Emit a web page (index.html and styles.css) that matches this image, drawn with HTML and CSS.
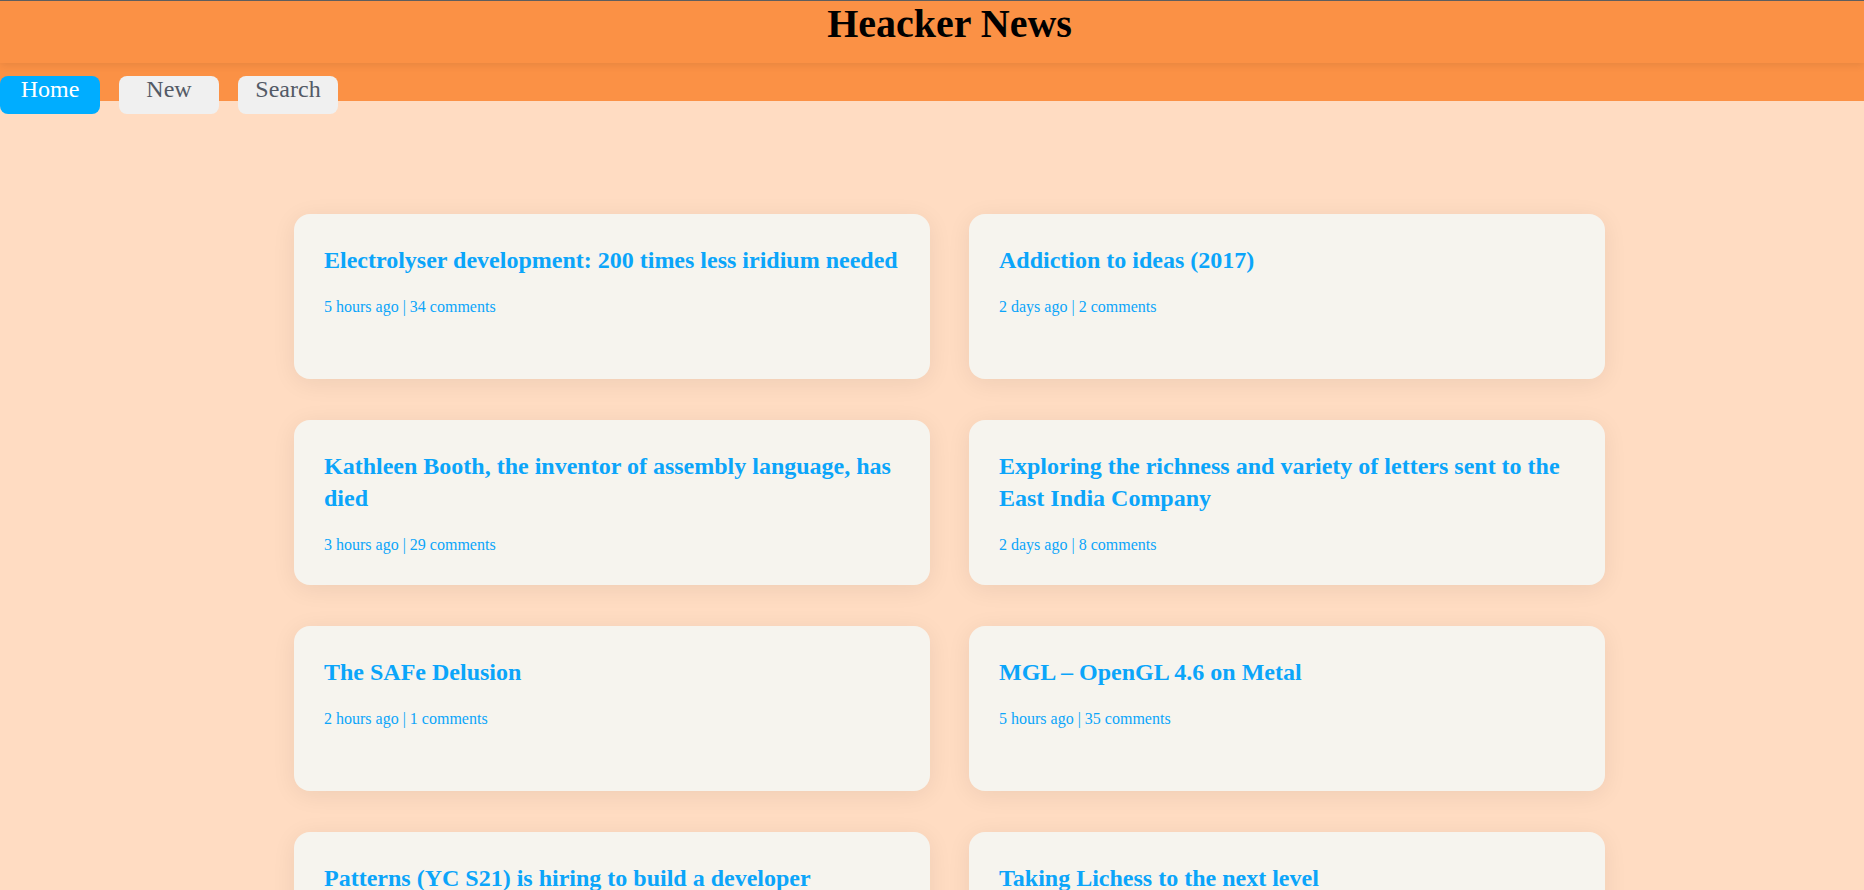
FILE: index.html
```html
<!DOCTYPE html>
<html lang="en">
<head>
<meta charset="utf-8">
<title>Heacker News</title>
<link rel="stylesheet" href="styles.css">
</head>
<body>
<header class="site-header">
  <h1 class="site-title">Heacker News</h1>
</header>
<nav class="tabs">
  <a class="tab tab-active" href="#">Home</a>
  <a class="tab" href="#">New</a>
  <a class="tab" href="#">Search</a>
</nav>
<main class="feed">
  <article class="card">
    <h2 class="card-title">Electrolyser development: 200 times less iridium needed</h2>
    <p class="card-meta">5 hours ago | 34 comments</p>
  </article>
  <article class="card">
    <h2 class="card-title">Addiction to ideas (2017)</h2>
    <p class="card-meta">2 days ago | 2 comments</p>
  </article>
  <article class="card">
    <h2 class="card-title">Kathleen Booth, the inventor of assembly language, has died</h2>
    <p class="card-meta">3 hours ago | 29 comments</p>
  </article>
  <article class="card">
    <h2 class="card-title">Exploring the richness and variety of letters sent to the East India Company</h2>
    <p class="card-meta">2 days ago | 8 comments</p>
  </article>
  <article class="card">
    <h2 class="card-title">The SAFe Delusion</h2>
    <p class="card-meta">2 hours ago | 1 comments</p>
  </article>
  <article class="card">
    <h2 class="card-title">MGL – OpenGL 4.6 on Metal</h2>
    <p class="card-meta">5 hours ago | 35 comments</p>
  </article>
  <article class="card">
    <h2 class="card-title">Patterns (YC S21) is hiring to build a developer platform</h2>
    <p class="card-meta">4 hours ago | 0 comments</p>
  </article>
  <article class="card">
    <h2 class="card-title">Taking Lichess to the next level</h2>
    <p class="card-meta">6 hours ago | 12 comments</p>
  </article>
</main>
</body>
</html>
```
FILE: styles.css
```css
html, body {
  margin: 0;
  padding: 0;
}
body {
  background: #ffdcc2;
  font-family: "Liberation Serif", "Times New Roman", serif;
  overflow-x: hidden;
}
.site-header {
  position: relative;
  z-index: 2;
  height: 63px;
  box-sizing: border-box;
  border-top: 1px solid #5e5e5e;
  background: #fb9145;
  box-shadow: 0 2px 8px rgba(0, 0, 0, 0.09);
}
.site-title {
  margin: 0;
  padding-left: 35px;
  text-align: center;
  font-size: 40px;
  font-weight: bold;
  line-height: 46px;
  color: #000;
}
.tabs {
  position: relative;
  z-index: 1;
  display: flex;
  gap: 19px;
  height: 38px;
  background: #fb9145;
}
.tab {
  display: block;
  box-sizing: border-box;
  width: 100px;
  height: 38px;
  margin-top: 13px;
  padding-top: 1px;
  border-radius: 8px;
  background: #f0f0f0;
  color: #535a66;
  font-size: 24px;
  line-height: 24px;
  text-align: center;
  text-decoration: none;
}
.tab-active {
  background: #00adff;
  color: #fff;
}
.feed {
  display: grid;
  grid-template-columns: repeat(2, 636px);
  justify-content: center;
  column-gap: 39px;
  row-gap: 41px;
  padding: 113px 0 40px 35px;
}
.card {
  box-sizing: border-box;
  height: 165px;
  padding: 30px 26px 30px 30px;
  border-radius: 16px;
  background: #f6f4ee;
  box-shadow: 0 4px 24px rgba(0, 0, 0, 0.07);
  overflow: hidden;
}
.card-title {
  margin: 0;
  font-size: 24px;
  line-height: 32px;
  font-weight: bold;
  color: #0ba5fa;
}
.card-meta {
  margin: 22px 0 0;
  font-size: 16px;
  color: #0ba5fa;
}
```
